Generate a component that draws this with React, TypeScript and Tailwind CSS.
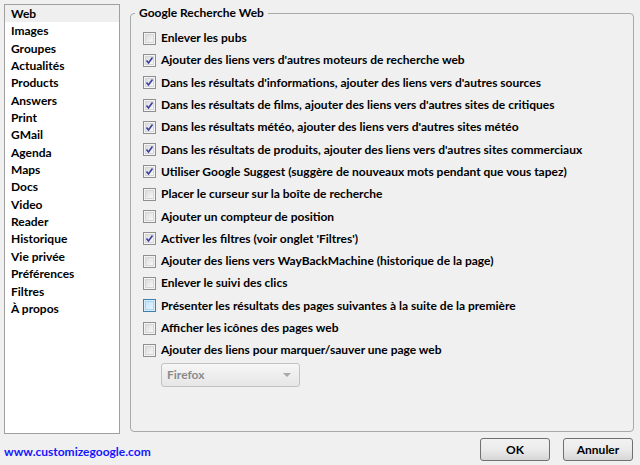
import React from "react"

const sections = [
  "Web",
  "Images",
  "Groupes",
  "Actualités",
  "Products",
  "Answers",
  "Print",
  "GMail",
  "Agenda",
  "Maps",
  "Docs",
  "Video",
  "Reader",
  "Historique",
  "Vie privée",
  "Préférences",
  "Filtres",
  "À propos",
]

const options: { label: string; checked?: boolean; hover?: boolean }[] = [
  { label: "Enlever les pubs" },
  { label: "Ajouter des liens vers d'autres moteurs de recherche web", checked: true },
  { label: "Dans les résultats d'informations, ajouter des liens vers d'autres sources", checked: true },
  { label: "Dans les résultats de films, ajouter des liens vers d'autres sites de critiques", checked: true },
  { label: "Dans les résultats météo, ajouter des liens vers d'autres sites météo", checked: true },
  { label: "Dans les résultats de produits, ajouter des liens vers d'autres sites commerciaux", checked: true },
  { label: "Utiliser Google Suggest (suggère de nouveaux mots pendant que vous tapez)", checked: true },
  { label: "Placer le curseur sur la boîte de recherche" },
  { label: "Ajouter un compteur de position" },
  { label: "Activer les filtres (voir onglet 'Filtres')", checked: true },
  { label: "Ajouter des liens vers WayBackMachine (historique de la page)" },
  { label: "Enlever le suivi des clics" },
  { label: "Présenter les résultats des pages suivantes à la suite de la première", hover: true },
  { label: "Afficher les icônes des pages web" },
  { label: "Ajouter des liens pour marquer/sauver une page web" },
]

function Checkbox({ checked, hover }: { checked?: boolean; hover?: boolean }) {
  return (
    <div
      className={
        "w-[13px] h-[13px] shrink-0 border flex items-center justify-center " +
        (hover ? "border-[#3c7fb1] bg-[#d8ecfa]" : "border-[#8f8f8f] bg-[#f4f4f4]")
      }
    >
      <div
        className={
          "w-[9px] h-[9px] border " +
          (hover
            ? "border-[#a8d4f2] bg-gradient-to-br from-[#c2e3f8] to-[#e6f4fd]"
            : "border-[#d6d6d6] bg-gradient-to-br from-[#dcdcdc] to-[#f8f8f8]")
        }
      >
        {checked && (
          <svg width="9" height="9" viewBox="0 0 9 9" className="block -mt-px -ml-px">
            <path d="M1.5 4.5 L3.5 7 L7.5 1.5" fill="none" stroke="#3a3fa0" strokeWidth="1.6" />
          </svg>
        )}
      </div>
    </div>
  )
}

export default function App() {
  return (
    <div
      className="w-[640px] h-[465px] bg-[#f0f0f0] text-black text-[12px] font-bold flex flex-col px-[4px] pt-[4px] overflow-hidden"
      style={{ fontFamily: "Lato, 'Liberation Sans', sans-serif" }}
    >
      <div className="flex gap-[10px] h-[430px]">
        <div className="w-[116px] shrink-0 border border-[#a0a0a0] bg-white">
          {sections.map((s, i) => (
            <div
              key={s}
              className={"h-[17.35px] leading-[15px] pt-px pl-[6px] " + (i === 0 ? "bg-[#efefef]" : "")}
            >
              {s}
            </div>
          ))}
        </div>
        <div className="flex-1 min-w-0 pt-[9px] pr-[2px]">
          <div className="relative h-[419px] border border-[#a9a9a9] rounded-[4px] pt-[13px] pl-[12px]">
            <div className="absolute -top-[8px] left-[4px] px-[4px] bg-[#f0f0f0] leading-[14px]">
              Google Recherche Web
            </div>
            {options.map((o) => (
              <div key={o.label} className="h-[22.3px] flex items-center gap-[5px]">
                <Checkbox checked={o.checked} hover={o.hover} />
                <span className="whitespace-nowrap">{o.label}</span>
              </div>
            ))}
            <div className="ml-[18px] mt-[2px] w-[139px] h-[24px] rounded-[3px] border border-[#c2c2c2] bg-gradient-to-b from-[#f6f6f6] to-[#e6e6e6] flex items-center justify-between px-[5px] text-[#8a8a8a]">
              <span>Firefox</span>
              <svg width="8" height="5" viewBox="0 0 8 5" className="mr-[3px]">
                <path d="M0 0 H8 L4 4 Z" fill="#a8a8a8" />
              </svg>
            </div>
          </div>
        </div>
      </div>
      <div className="flex items-center justify-between h-[31px]">
        <span className="text-[#1515ff] mt-[4px]">www.customizegoogle.com</span>
        <div className="flex gap-[13px] pr-[3px]">
          <button className="w-[70px] h-[23px] rounded-[3px] border border-[#707070] bg-gradient-to-b from-[#f2f2f2] via-[#ebebeb] to-[#d6d6d6] font-bold">
            OK
          </button>
          <button className="w-[70px] h-[23px] rounded-[3px] border border-[#707070] bg-gradient-to-b from-[#f2f2f2] via-[#ebebeb] to-[#d6d6d6] font-bold">
            Annuler
          </button>
        </div>
      </div>
    </div>
  )
}
